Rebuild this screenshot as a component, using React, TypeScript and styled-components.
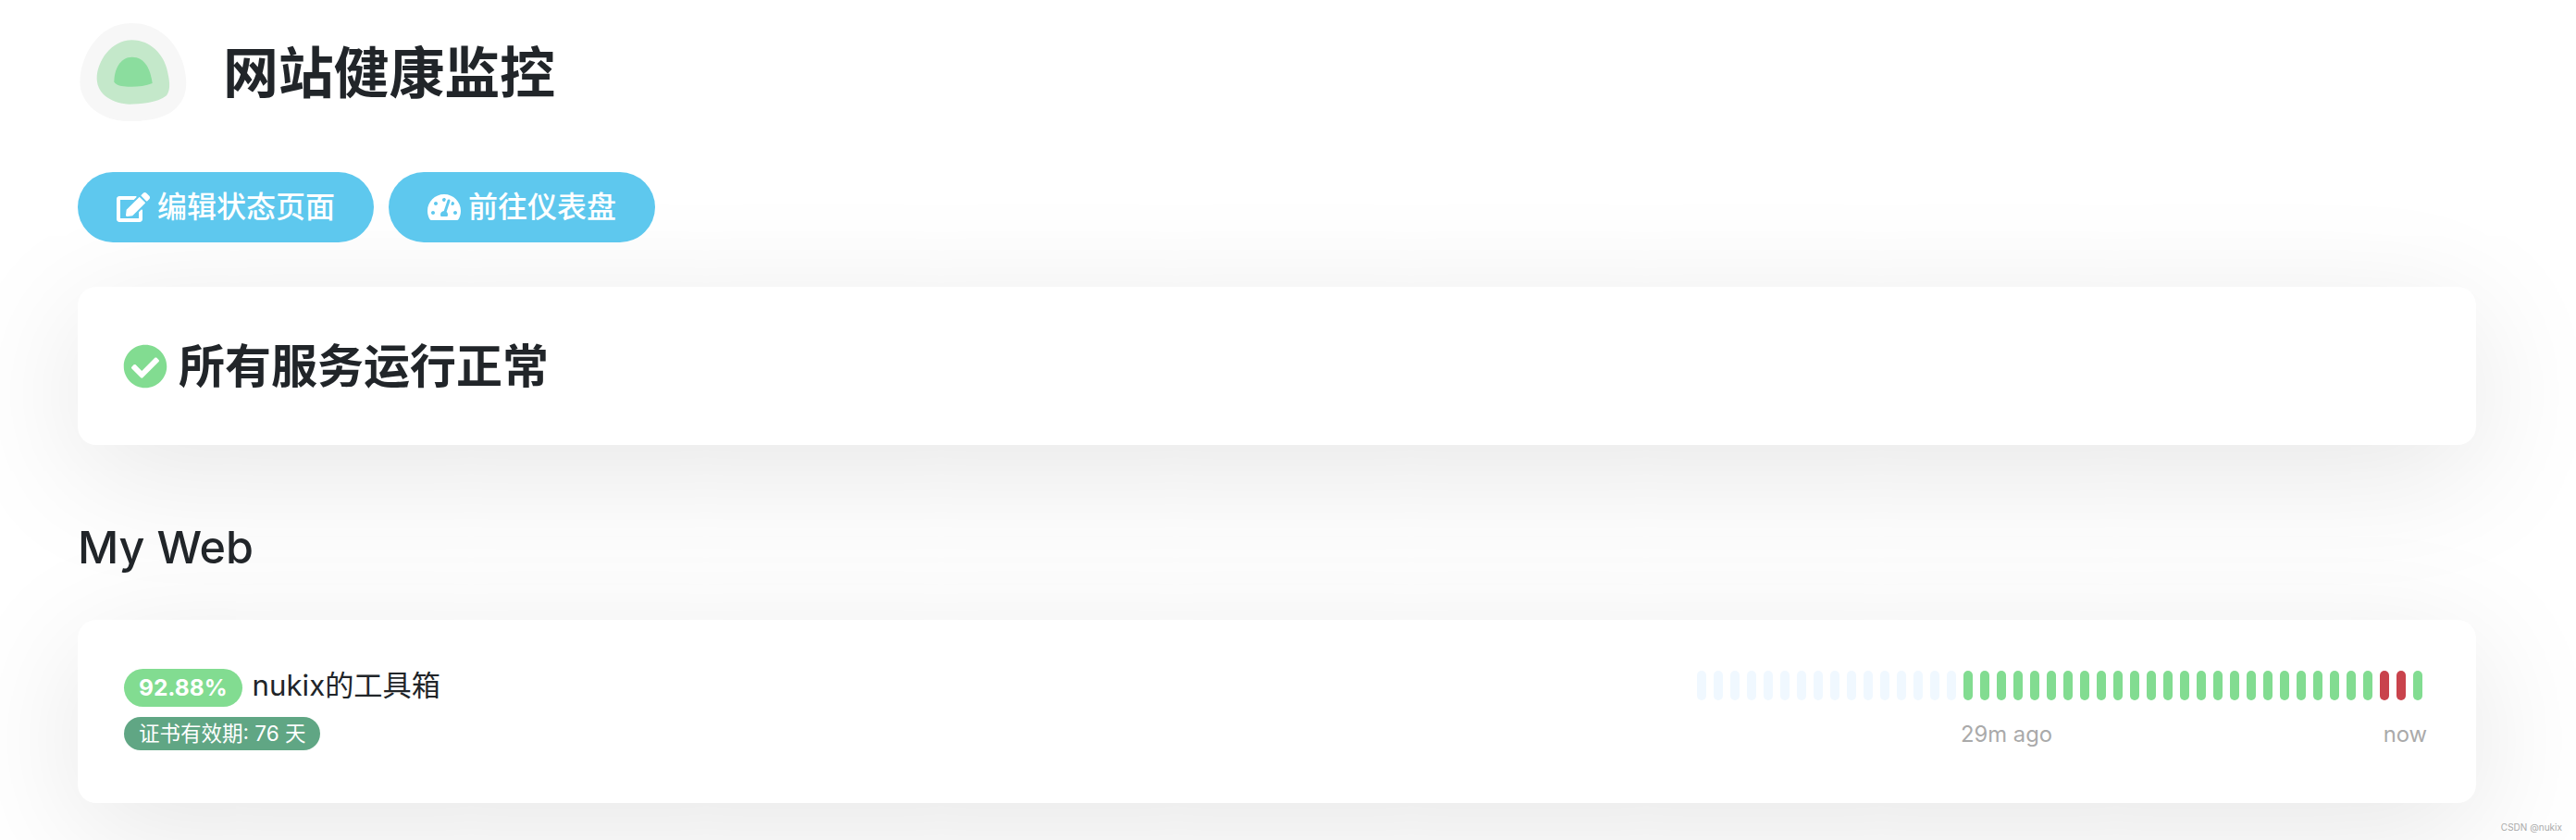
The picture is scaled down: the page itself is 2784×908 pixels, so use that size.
import React from "react";
import styled, { createGlobalStyle } from "styled-components";
import { FaEdit, FaTachometerAlt, FaCheckCircle } from "react-icons/fa";

const Global = createGlobalStyle`
  html, body { margin: 0; padding: 0; background: #fff; }
  body { width: 2784px; height: 908px; overflow: hidden; font-family: Inter, "Noto Sans CJK SC", sans-serif; color: #212529; }
`;

const Page = styled.div`
  position: relative;
  box-sizing: border-box;
  width: 2784px;
  height: 908px;
  overflow: hidden;
  padding: 25px 108px 0 84px;
`;

const Header = styled.header`
  display: flex;
  align-items: center;
  gap: 39px;
  margin-left: 2px;
`;

const Logo = styled.svg`
  width: 116px;
  height: 106px;
  display: block;
`;

const Title = styled.h1`
  margin: 0;
  padding-top: 2px;
  font-size: 60px;
  line-height: 104px;
  font-weight: 700;
  letter-spacing: -0.2px;
`;

const Actions = styled.div`
  display: flex;
  gap: 16px;
  margin-top: 55px;
`;

const ActionButton = styled.button`
  display: flex;
  align-items: center;
  gap: 8px;
  height: 76px;
  padding: 0 42px;
  border: 0;
  border-radius: 38px;
  background: #5ec8ee;
  color: #fff;
  font-family: inherit;
  font-size: 32px;
  font-weight: 500;
  line-height: 48px;
  svg { width: 36px; height: 32px; display: block; }
`;

const Card = styled.section`
  background: #fff;
  border-radius: 20px;
  box-shadow: 0 30px 140px rgba(0, 0, 0, 0.1);
`;

const StatusCard = styled(Card)`
  display: flex;
  align-items: center;
  gap: 12px;
  height: 171px;
  margin-top: 48px;
  padding-left: 49px;
  svg { width: 48px; height: 48px; color: #82dc91; display: block; }
`;

const StatusText = styled.h2`
  margin: 0;
  font-size: 50px;
  line-height: 60px;
  font-weight: 700;
`;

const GroupTitle = styled.h2`
  margin: 81px 0 48px;
  font-size: 48.5px;
  line-height: 60px;
  font-weight: 500;
`;

const MonitorCard = styled(Card)`
  display: flex;
  justify-content: space-between;
  height: 198px;
  padding: 53px 53px 0 50px;
  box-sizing: border-box;
`;

const MonitorInfo = styled.div`
  display: flex;
  flex-direction: column;
  align-items: flex-start;
  gap: 11px;
`;

const NameRow = styled.div`
  display: flex;
  align-items: flex-start;
  gap: 11px;
`;

const Uptime = styled.span`
  display: block;
  height: 41px;
  padding: 0 16px;
  border-radius: 21px;
  background: #82dc91;
  color: #fff;
  font-size: 24.5px;
  line-height: 41px;
  font-weight: 700;
`;

const Name = styled.span`
  font-size: 31.2px;
  line-height: 36px;
`;

const CertBadge = styled.span`
  display: block;
  height: 36px;
  padding: 0 16px;
  border-radius: 18px;
  background: #60a684;
  color: #fff;
  font-size: 22.5px;
  line-height: 36px;
`;

const Heartbeat = styled.div`
  display: flex;
  flex-direction: column;
  align-items: flex-end;
`;

const Bars = styled.div`
  display: flex;
  gap: 8px;
  margin-top: 2px;
  margin-right: 5px;
`;

const Bar = styled.span<{ $state: "empty" | "up" | "down" }>`
  display: block;
  width: 10px;
  height: 32px;
  border-radius: 5px;
  background: ${(p) => (p.$state === "empty" ? "#f0f8ff" : p.$state === "up" ? "#82dc91" : "#c9434c")};
`;

const TimeRow = styled.div`
  display: flex;
  justify-content: space-between;
  width: 504px;
  margin-top: 22px;
  color: #aaa;
  font-size: 23.8px;
  line-height: 30px;
`;

const Watermark = styled.div`
  position: absolute;
  right: 15px;
  bottom: 8px;
  color: #aaa;
  font-size: 10px;
  line-height: 12px;
`;

const beats = Array.from({ length: 44 }, (_, i) =>
  i < 16 ? "empty" : i === 41 || i === 42 ? "down" : "up"
) as ("empty" | "up" | "down")[];

export default function App() {
  return (
    <Page>
      <Global />
      <Header>
        <Logo viewBox="48 45 348 318">
          <path fill="#f7f7f7" d="M215 45C300 45 360 100 385 180C400 240 400 290 350 330C310 360 240 365 195 363C130 360 60 320 50 250C42 170 100 45 215 45Z" />
          <path fill="#c4e8ca" d="M218 100C280 100 320 150 330 190C340 230 345 260 330 280C300 305 240 308 210 308C160 306 105 280 104 225C104 170 150 100 218 100Z" />
          <path fill="#8bdd9e" d="M218 155C260 155 278 195 284 240C260 250 230 252 205 251C185 250 165 248 160 235C160 195 180 155 218 155Z" />
        </Logo>
        <Title>网站健康监控</Title>
      </Header>
      <Actions>
        <ActionButton><FaEdit />编辑状态页面</ActionButton>
        <ActionButton><FaTachometerAlt />前往仪表盘</ActionButton>
      </Actions>
      <StatusCard>
        <FaCheckCircle />
        <StatusText>所有服务运行正常</StatusText>
      </StatusCard>
      <GroupTitle>My Web</GroupTitle>
      <MonitorCard>
        <MonitorInfo>
          <NameRow>
            <Uptime>92.88%</Uptime>
            <Name>nukix的工具箱</Name>
          </NameRow>
          <CertBadge>证书有效期: 76 天</CertBadge>
        </MonitorInfo>
        <Heartbeat>
          <Bars>
            {beats.map((s, i) => <Bar key={i} $state={s} />)}
          </Bars>
          <TimeRow>
            <span>29m ago</span>
            <span>now</span>
          </TimeRow>
        </Heartbeat>
      </MonitorCard>
      <Watermark>CSDN @nukix</Watermark>
    </Page>
  );
}
